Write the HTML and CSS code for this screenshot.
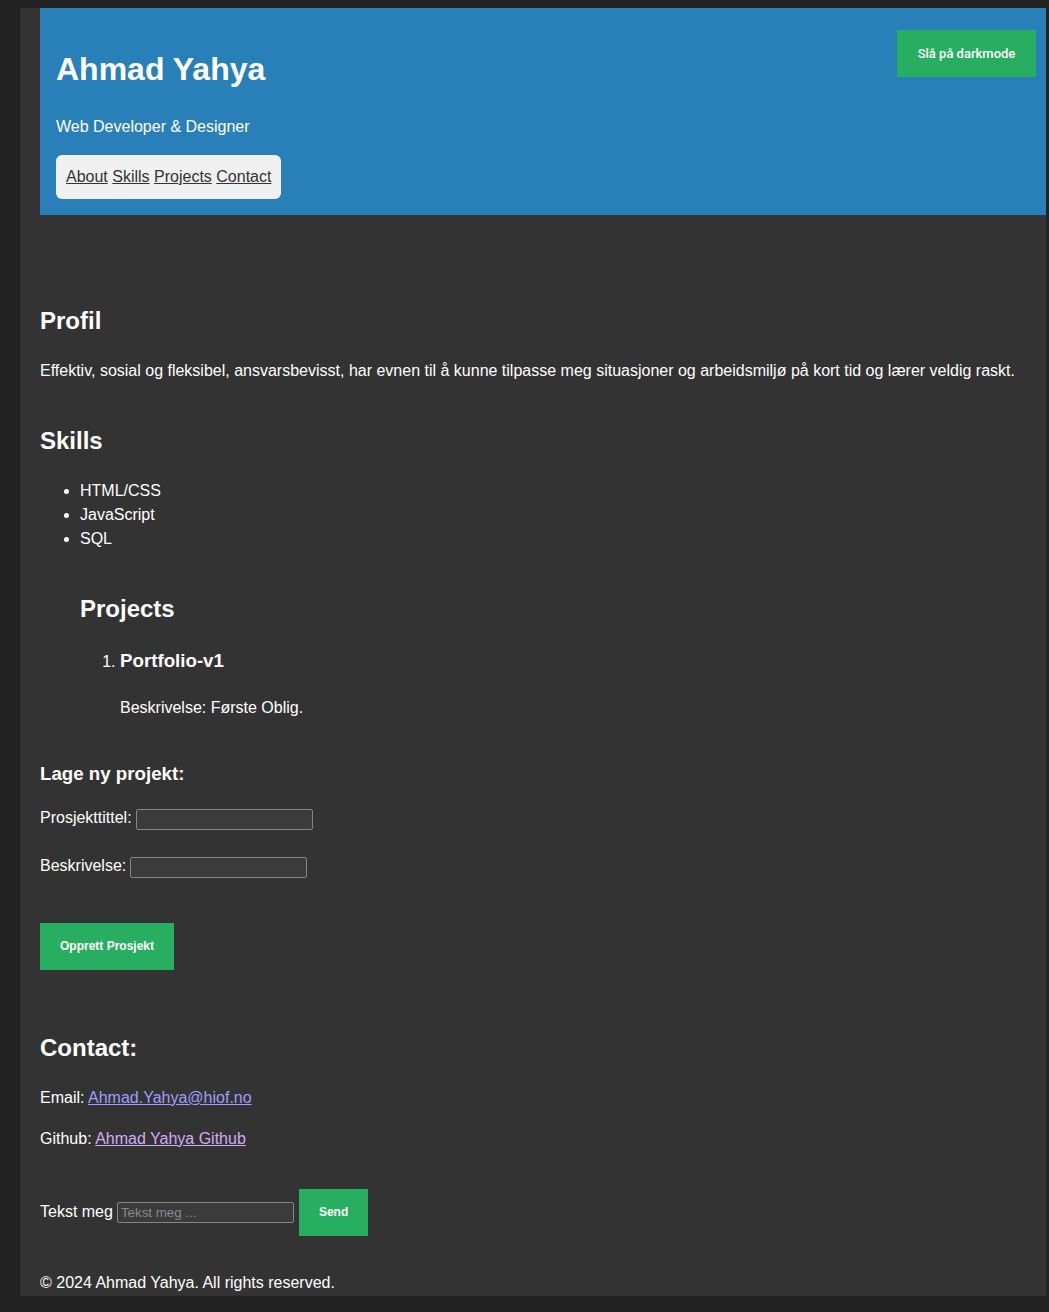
FILE: index.html
```html
<!DOCTYPE html>
<html lang="no">
<head>
<meta charset="utf-8">
<title>Ahmad Yahya</title>
<link rel="stylesheet" href="styles.css">
</head>
<body>
<div class="page">
  <header class="site-header">
    <h1 class="name">Ahmad Yahya</h1>
    <p class="tagline">Web Developer &amp; Designer</p>
    <nav class="nav"><a href="#about">About</a> <a href="#skills">Skills</a> <a href="#projects">Projects</a> <a href="#contact">Contact</a></nav>
    <button class="btn btn-mode" type="button">Slå på darkmode</button>
  </header>

  <main class="main">
    <section class="section" id="about">
      <h2 class="h2">Profil</h2>
      <p class="text">Effektiv, sosial og fleksibel, ansvarsbevisst, har evnen til å kunne tilpasse meg situasjoner og arbeidsmiljø på kort tid og lærer veldig raskt.</p>
    </section>

    <section class="section" id="skills">
      <h2 class="h2">Skills</h2>
      <ul class="skills">
        <li>HTML/CSS</li>
        <li>JavaScript</li>
        <li>SQL</li>
      </ul>
    </section>

    <section class="section section-indent" id="projects">
      <h2 class="h2">Projects</h2>
      <ol class="projects">
        <li>
          <h3 class="h3 project-title">Portfolio-v1</h3>
          <p class="text">Beskrivelse: Første Oblig.</p>
        </li>
      </ol>
    </section>

    <section class="section section-form">
      <h3 class="h3 form-title">Lage ny projekt:</h3>
      <form class="new-project">
        <div class="row"><label for="title">Prosjekttittel:</label><input class="field field-row" id="title" type="text"></div>
        <div class="row"><label for="desc">Beskrivelse:</label><input class="field field-row" id="desc" type="text"></div>
        <button class="btn btn-create" type="button">Opprett Prosjekt</button>
      </form>
    </section>

    <section class="section section-contact" id="contact">
      <h2 class="h2">Contact:</h2>
      <p class="text">Email: <a class="link" href="#mail">Ahmad.Yahya@hiof.no</a></p>
      <p class="text contact-gh">Github: <a class="link link-visited" href="#gh">Ahmad Yahya Github</a></p>
      <form class="message">
        <label for="msg">Tekst meg</label>
        <input class="field" id="msg" type="text" placeholder="Tekst meg ...">
        <button class="btn btn-send" type="button">Send</button>
      </form>
    </section>
  </main>

  <footer class="footer">
    <p class="text">© 2024 Ahmad Yahya. All rights reserved.</p>
  </footer>
</div>
</body>
</html>
```

FILE: styles.css
```css
html, body {
  background: #222222;
}

body {
  margin: 0;
  padding: 8px 3px 16px 20px;
  font-family: "Liberation Sans", Arial, sans-serif;
  font-size: 16px;
  line-height: 1.5;
  color: #ffffff;
}

.page {
  background: #333333;
  padding: 0 0 1px 20px;
}

.site-header {
  position: relative;
  background: #2980b9;
  padding: 16px;
  color: #ffffff;
}

.name {
  margin: 21.44px 0;
  font-size: 32px;
  line-height: 48px;
  font-weight: bold;
}

.tagline {
  margin: 0 0 16px;
}

.nav {
  width: fit-content;
  background: #f0f0f0;
  border-radius: 6px;
  padding: 10px;
}

.nav a {
  color: #333333;
  text-decoration: underline;
}

.btn {
  border: none;
  background: #27ae60;
  color: #ffffff;
  font-family: "Liberation Sans", Arial, sans-serif;
  font-size: 12px;
  font-weight: bold;
  line-height: 17px;
  padding: 15px 20px;
  cursor: pointer;
  border-radius: 0;
}

.btn-mode {
  position: absolute;
  top: 22px;
  right: 10px;
  width: 139px;
  padding: 15px 0;
  font-family: Roboto, "Liberation Sans", Arial, sans-serif;
  font-weight: 500;
  font-size: 13px;
}

.main {
  padding-top: 68px;
}

.section {
  padding: 20px 0;
}

.h2 {
  margin: 0 0 20px;
  font-size: 24px;
  line-height: 36px;
  font-weight: bold;
}

.h3 {
  font-size: 18.72px;
  line-height: 28px;
  font-weight: bold;
}

.text {
  margin: 0;
}

.skills {
  margin: 0;
  padding-left: 40px;
}

.section-indent {
  margin-left: 40px;
}

.projects {
  margin: 0;
  padding-left: 40px;
}

.project-title {
  margin: 0 0 21px;
}

.form-title {
  margin: 0 0 18px;
}

.new-project {
  margin: 0;
}

.row {
  display: flex;
  align-items: center;
  gap: 4px;
  height: 24px;
  margin-bottom: 24px;
}

.field {
  box-sizing: border-box;
  width: 177px;
  height: 21px;
  margin: 0;
  padding: 1px 3px;
  background: #3b3b3b;
  border: 1px solid #858585;
  border-radius: 2px;
  color: #ffffff;
  font-family: "Liberation Sans", Arial, sans-serif;
  font-size: 13.33px;
}

.field-row {
  align-self: flex-end;
}

.field::placeholder {
  color: #8a8a8a;
}

.btn-create {
  display: block;
  margin-top: 45px;
  margin-bottom: 20px;
}

.link {
  color: #9e9eff;
  text-decoration: underline;
}

.link-visited {
  color: #d0adf0;
}

.contact-gh {
  margin-top: 17px;
}

.section-contact {
  padding-bottom: 0;
}

.message {
  display: flex;
  align-items: center;
  gap: 4px;
  margin-top: 38px;
}

.btn-send {
  margin-left: 1px;
}

.footer {
  margin-top: 35px;
}
```
